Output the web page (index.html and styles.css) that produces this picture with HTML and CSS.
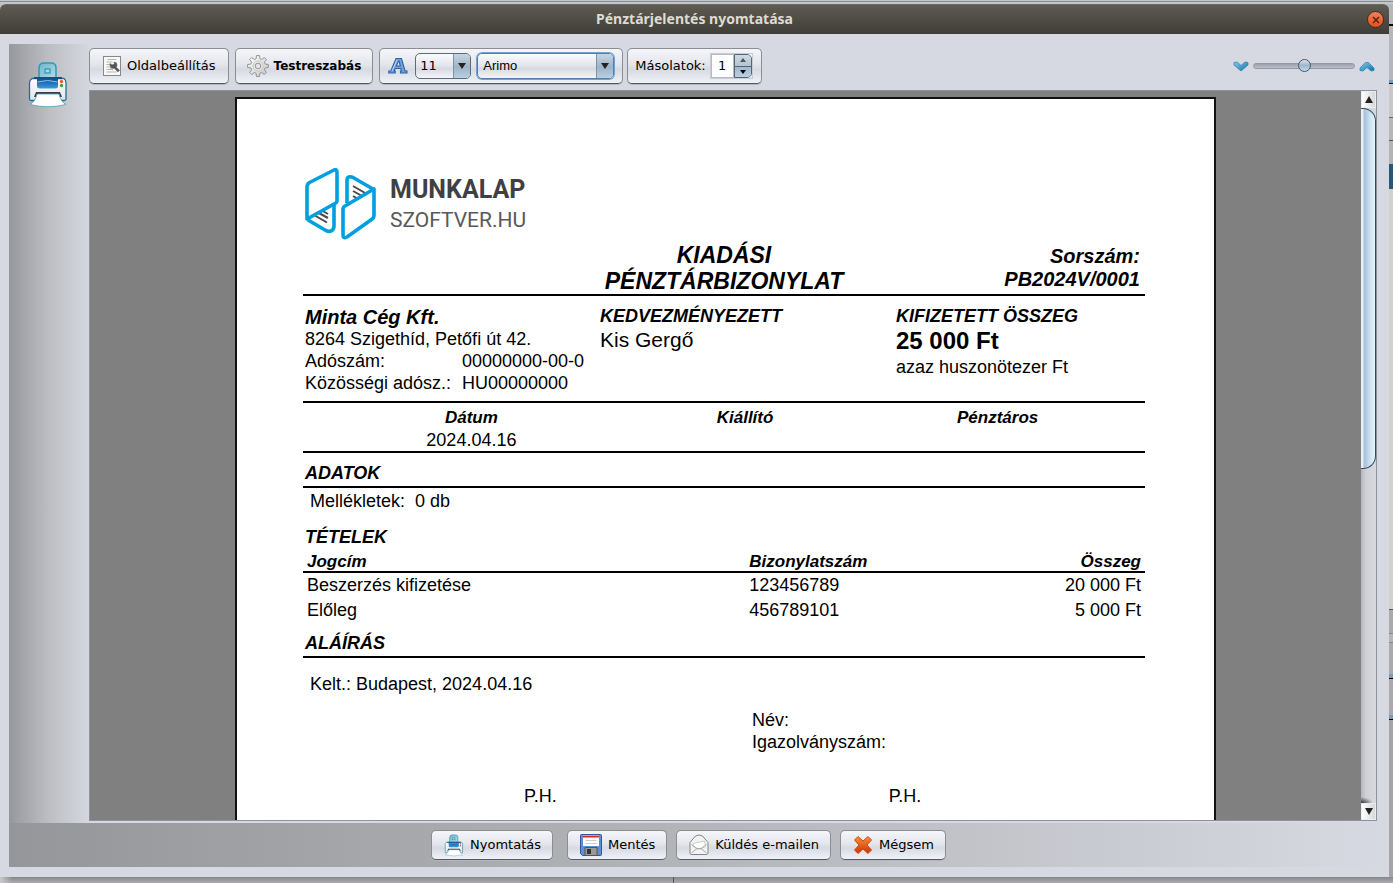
FILE: index.html
```html
<!DOCTYPE html>
<html lang="hu">
<head>
<meta charset="utf-8">
<title>Pénztárjelentés nyomtatása</title>
<link rel="stylesheet" href="styles.css">
</head>
<body>
<svg class="defs" width="0" height="0" aria-hidden="true">
  <defs>
    <linearGradient id="gTray" x1="0" y1="0" x2="1" y2="1"><stop offset="0" stop-color="#6fb6cb"/><stop offset="1" stop-color="#b5dbe6"/></linearGradient>
    <linearGradient id="gSlot" x1="0" y1="0" x2="0" y2="1"><stop offset="0" stop-color="#0a50a0"/><stop offset="1" stop-color="#3f9ad8"/></linearGradient>
    <linearGradient id="gBody" x1="0" y1="0" x2="0" y2="1"><stop offset="0" stop-color="#ffffff"/><stop offset="1" stop-color="#dfe3ea"/></linearGradient>
    <linearGradient id="gRed" x1="0" y1="0" x2="0" y2="1"><stop offset="0" stop-color="#f6913c"/><stop offset="1" stop-color="#cc3300"/></linearGradient>
    <linearGradient id="gBlue" x1="0" y1="0" x2="1" y2="1"><stop offset="0" stop-color="#8ccbe6"/><stop offset="1" stop-color="#0d6ea8"/></linearGradient>
    <linearGradient id="gGear" x1="0" y1="0" x2="1" y2="1"><stop offset="0" stop-color="#ffffff"/><stop offset="1" stop-color="#c4c4c4"/></linearGradient>
    <symbol id="printer" viewBox="0 0 40 48">
      <path d="M11 18V7q0-5 5-5h7q5 0 5 5v11z" fill="url(#gTray)" stroke="#2d9bb8" stroke-width="1.5"/>
      <rect x="17" y="8" width="5" height="4" fill="#a9d7e2" stroke="#2d9bb8" stroke-width="1.3"/>
      <path d="M4 17.500Q1.500 19 1.500 22V38q0 1.500 2 1.500H36q2 0 2-1.500V22q0-3-2-4.500z" fill="url(#gBody)" stroke="#1d7193" stroke-width="1.3"/>
      <path d="M6 16H34v2H6z" fill="#1c4f78"/>
      <path d="M9 17.500H30V25q0 2.500-3 2.500H12q-3 0-3-2.500z" fill="url(#gSlot)"/>
      <path d="M9.500 21q10-3 20 0" fill="none" stroke="#86c3ee" stroke-width="1"/>
      <circle cx="33.500" cy="20.500" r="1.700" fill="#f05a22"/><circle cx="33.500" cy="24.500" r="1.700" fill="#45a22f"/>
      <path d="M8 31H32l2 5H6z" fill="#3a3d42"/>
      <path d="M9 33H31q2 8 7 10.500Q20 48 2 43.500q5-2.500 7-10.500z" fill="#fff" stroke="#4aa0bd" stroke-width=".8"/>
    </symbol>
  </defs>
</svg>

<div class="desktop">
  <main class="window">
    <header class="titlebar">
      <h1>Pénztárjelentés nyomtatása</h1>
      <button class="close" type="button" aria-label="Bezárás"><svg width="8" height="8" viewBox="0 0 8 8"><path d="M1 1l6 6M7 1l-6 6" stroke="#5c2410" stroke-width="1.500"/></svg></button>
    </header>

    <div class="frame">
      <div class="work">
        <aside class="side"><svg width="40" height="48"><use href="#printer"/></svg></aside>
        <section class="main">
          <div class="toolbar">
            <button class="btn tool" type="button">
              <svg width="18" height="20" viewBox="0 0 18 20"><rect x=".5" y=".5" width="17" height="19" fill="#f8f8f8" stroke="#888"/><path d="M4.500 3.500h9M3.500 6h6M3.500 8.500h4M3.500 11h4M3.500 13.500h5M3.500 16h10" stroke="#b5b5b5"/><path d="M7 7.500q2 2 3.500 1t.500-2.500q3 0 3 3 0 1.500-.800 2.200l3.300 3-1.500 1.700-3.500-3.400q-4 .5-4.500-3zM7 12l3 2" fill="#555" stroke="#666" stroke-width=".6"/></svg>
              Oldalbeállítás
            </button>
            <button class="btn tool strong" type="button">
              <svg width="24" height="24" viewBox="0 0 24 24"><g fill="url(#gGear)" stroke="#8b8b8b" stroke-width=".9" stroke-linejoin="round"><path d="M10.500 1.500h3l.4 3.200 1.800.8 2.600-2 2.100 2.100-2 2.600.8 1.900 3.200.4v3l-3.200.4-.8 1.900 2 2.600-2.100 2.100-2.600-2-1.800.8-.4 3.200h-3l-.4-3.200-1.800-.8-2.600 2-2.100-2.100 2-2.600-.8-1.900-3.200-.4v-3l3.200-.4.8-1.900-2-2.600 2.100-2.100 2.600 2 1.800-.8z"/><circle cx="12" cy="12" r="5" fill="#e8e8e8" stroke="#c4c4c4"/><circle cx="12" cy="12" r="2.800" fill="#e2e4ea"/></g></svg>
              Testreszabás
            </button>
            <div class="panel fonts">
              <svg width="20" height="18" viewBox="0 0 20 18"><path d="M.8 16v-2h2L8 1.500h5.500L17 14h2v2h-6.500v-2h1l-.6-2.500H7.200L6 14h1.200v2zM8.300 9h4l-1.200-5h-.6z" fill="#6fa3dc" fill-rule="evenodd" stroke="#2f61a5" stroke-width="1.100"/><path d="M4 14L9 3" fill="none" stroke="#bcd8f3" stroke-width="1"/></svg>
              <span class="combo size"><select aria-label="Betűméret"><option>11</option></select></span>
              <span class="combo family"><select aria-label="Betűtípus"><option>Arimo</option></select></span>
            </div>
            <div class="panel copies">
              <label for="copies">Másolatok:</label>
              <span class="spinner">
                <input id="copies" type="number" value="1" min="1">
                <span class="steps"><button type="button" aria-label="Több"><i class="tri up"></i></button><button type="button" aria-label="Kevesebb"><i class="tri down"></i></button></span>
              </span>
            </div>
            <div class="zoom">
              <svg width="16" height="11" viewBox="0 0 16 11"><path d="M1 1.500l3-.5 4 3.500L12 1l3 .5v2.500L8 10 1 4z" fill="url(#gBlue)" stroke="#2a8abb" stroke-width=".8"/></svg>
              <input type="range" min="0" max="100" value="51" aria-label="Nagyítás">
              <svg width="16" height="11" viewBox="0 0 16 11"><path d="M1 9.500l3 .5 4-3.500 4 3.500 3-.5V7L9.500 1.500h-3L1 7z" fill="url(#gBlue)" stroke="#2a8abb" stroke-width=".8"/></svg>
            </div>
          </div>

          <div class="preview">
            <div class="canvas">
              <article class="page">
                <div class="logo">
                  <svg width="72" height="72" viewBox="0 0 72 72" fill="none" stroke="#009fe0" stroke-width="3.600" stroke-linejoin="round">
                    <path d="M9 47l13 7.500M12 44l11 6M16 42l7 4M48 18l13 7.500M48 23l9 5M48 28l5 3" stroke="#4a4a4c" stroke-width="2"/>
                    <path d="M29 36v22q0 4-3 5t-6-1L3 52"/>
                    <path d="M42 35V13q0-6 6-3.500L68 21"/>
                    <path d="M2 51V19q0-3 2.500-4.500L29 2q3-1.200 3 2v28.500q0 2-2 3z" fill="#fff"/>
                    <path d="M69 21v26q0 3-2.500 4.500L42 69q-4 2-4-2V41q0-2 2-3z" fill="#fff"/>
                  </svg>
                  <div class="logo-text"><strong>MUNKALAP</strong><span>SZOFTVER.HU</span></div>
                </div>
                <header class="doc-head">
                  <h2>KIADÁSI<br>PÉNZTÁRBIZONYLAT</h2>
                  <p>Sorszám:<br>PB2024V/0001</p>
                </header>
                <section class="parties">
                  <div>
                    <h3 class="company">Minta Cég Kft.</h3>
                    <p>8264 Szigethíd, Petőfi út 42.</p>
                    <dl><dt>Adószám:</dt><dd>00000000-00-0</dd><dt>Közösségi adósz.:</dt><dd>HU00000000</dd></dl>
                  </div>
                  <div>
                    <h3>KEDVEZMÉNYEZETT</h3>
                    <p class="payee">Kis Gergő</p>
                  </div>
                  <div>
                    <h3>KIFIZETETT ÖSSZEG</h3>
                    <p class="sum">25 000 Ft</p>
                    <p>azaz huszonötezer Ft</p>
                  </div>
                </section>
                <table class="dates">
                  <thead><tr><th class="c1">Dátum</th><th class="c2">Kiállító</th><th class="c3">Pénztáros</th></tr></thead>
                  <tbody><tr><td>2024.04.16</td><td></td><td></td></tr></tbody>
                </table>
                <h3 class="section ruled">ADATOK</h3>
                <p class="note">Mellékletek:&nbsp; 0 db</p>
                <h3 class="section items-title">TÉTELEK</h3>
                <table class="items">
                  <thead><tr><th class="name">Jogcím</th><th>Bizonylatszám</th><th class="num">Összeg</th></tr></thead>
                  <tbody>
                    <tr><td>Beszerzés kifizetése</td><td>123456789</td><td class="num">20 000 Ft</td></tr>
                    <tr><td>Előleg</td><td>456789101</td><td class="num">5 000 Ft</td></tr>
                  </tbody>
                </table>
                <h3 class="section ruled">ALÁÍRÁS</h3>
                <p class="issued">Kelt.: Budapest, 2024.04.16</p>
                <div class="signer"><p>Név:</p><p>Igazolványszám:</p></div>
                <div class="stamps"><span>P.H.</span><span>P.H.</span></div>
              </article>
            </div>
            <div class="scrollbar">
              <button type="button" aria-label="Fel"><i class="tri up big"></i></button>
              <div class="track"><div class="thumb"></div></div>
              <button type="button" aria-label="Le"><i class="tri down big"></i></button>
            </div>
          </div>
        </section>
      </div>

      <footer class="actions">
        <button class="btn act first" type="button"><svg width="20" height="23" viewBox="0 0 40 48"><use href="#printer"/></svg>Nyomtatás</button>
        <button class="btn act" type="button"><svg width="22" height="22" viewBox="0 0 22 22"><path d="M.5 1.500q0-1 1-1h19q1 0 1 1v19q0 1-1 1h-18l-2-2z" fill="#5f8fd2" stroke="#2d569b"/><path d="M3 1h16v11H3z" fill="#fff"/><path d="M3 1.500h16v2H3z" fill="#d22c20"/><path d="M5.500 6.500h11M5.500 9.500h11" stroke="#ccc"/><path d="M5 13.500h12v8H5z" fill="#9a9a98" stroke="#555"/><rect x="7" y="15" width="4" height="5" fill="#333"/></svg>Mentés</button>
        <button class="btn act" type="button"><svg width="20" height="22" viewBox="0 0 20 22"><path d="M1 8.500L6.500 2q3.500-2 7 0L19 8.500V19q0 1.500-1.500 1.500h-15Q1 20.500 1 19z" fill="#f3f3f3" stroke="#858585"/><path d="M4 9.500L15.500 7l1 5.500-5 2.500H8l-4-3z" fill="#fff" stroke="#ccc"/><path d="M2.500 10.500L8 14.500h4l5.500-4M2.500 19L8 14.500M17.500 19L12 14.500" fill="none" stroke="#aaa"/></svg>Küldés e-mailen</button>
        <button class="btn act" type="button"><svg width="20" height="20" viewBox="0 0 20 20"><path d="M5 1.500L10 6l5-4.500L18.500 5 14 10l4.500 5-3.500 3.500L10 14l-5 4.500L1.500 15 6 10 1.500 5z" fill="url(#gRed)" stroke="#cf4a12" stroke-width="1"/></svg>Mégsem</button>
      </footer>
    </div>
  </main>
  <div class="behind"></div>
</div>
</body>
</html>
```

FILE: styles.css
```css
* { box-sizing: border-box; }
body {
  margin: 0;
  height: 100vh;
  overflow: hidden;
  background: #a6a7aa;
  font: 13px/16px "DejaVu Sans", sans-serif;
  color: #000;
}
h1, h2, h3, p, dl, dd { margin: 0; }
button, input, select { font: inherit; color: inherit; }
button { cursor: pointer; }
.defs { position: absolute; }

.desktop {
  display: flex;
  height: 100vh;
  padding: 4px 0 6px;
  background:
    linear-gradient(#555, #555) 673px 100% / 1px 6px no-repeat,
    linear-gradient(90deg, #c8cacd, transparent 12px) 0 100% / 100% 6px no-repeat,
    linear-gradient(#86878a, #acadb0) 0 100% / 100% 6px no-repeat,
    linear-gradient(#c3c7cb 0 1px, #888c90 1px 2px, #c3c7cb 2px 4px) 0 0 / 100% 4px no-repeat,
    #b9babd;
}
.window {
  flex: 1;
  min-width: 0;
  display: flex;
  flex-direction: column;
  background: #d6d9e1;
  border-radius: 6px 6px 0 0;
}
.behind {
  width: 4px;
  background: linear-gradient(#b6b8bb 0 20px, #000 20px 22px, #b5b6bb 22px 76px, #7b9bb5 76px 79px, #111 79px 80px, #c8c8c8 80px 113px, #666 113px 114px, #b8b6b6 114px 136px, #555 136px 137px, #b5b3b5 137px 160px, #2b5673 160px 185px, #d2d1cc 185px 605px, #555 605px 606px, #aaa9ae 606px 629px, #888 629px 630px, #b5b4b8 630px 638px, #888 638px 639px, #aaa9ae 639px 670px, #7e99ab 670px 674px, #000 674px 675px, #aaa9ae 675px 711px, #7e99ab 711px 715px, #000 715px 716px, #a5a5a9 716px);
}

.titlebar {
  display: grid;
  grid-template-columns: 1fr auto 1fr;
  align-items: center;
  height: 30px;
  padding: 0 5px;
  background: linear-gradient(#5e5b52, #3e3d37);
  border-top: 1px solid #6b685e;
  border-radius: 6px 6px 0 0;
}
.titlebar h1 {
  grid-column: 2;
  padding-bottom: 2px;
  font: bold 14px/18px "Noto Sans", sans-serif;
  color: #dfdbd2;
}
.close {
  justify-self: end;
  display: grid;
  place-items: center;
  width: 17px;
  height: 17px;
  padding: 0;
  border: 1px solid #4a2a1c;
  border-radius: 50%;
  background: linear-gradient(#f2805a, #e4501d);
}

.frame {
  flex: 1;
  min-height: 0;
  display: flex;
  flex-direction: column;
  padding: 10px 12px 10px 9px;
}
.work { flex: 1; min-height: 0; display: flex; }
.side {
  width: 80px;
  padding: 17px 19px;
  background: linear-gradient(90deg, #97989c, #bdbec3 50%, #d4d8de);
}
.main { flex: 1; min-width: 0; display: flex; flex-direction: column; }

.toolbar { display: flex; gap: 6px; padding: 4px 0 6px; }
.btn, .panel {
  display: flex;
  align-items: center;
  border: 1px solid #8a8d92;
  border-bottom-color: #55585d;
  border-radius: 5px;
  background: linear-gradient(#f5f6f9, #e4e6ec 45%, #d8dae3 60%, #f0f2f9);
  box-shadow: 0 1px 0 #b3b6bd;
}
.tool { height: 36px; gap: 6px; padding: 0 12px 0 13px; }
.tool.strong { gap: 4px; padding: 0 11px 0 10px; font-size: 12px; font-weight: bold; }
.panel { height: 36px; }
.fonts { padding: 0 8px; gap: 7px; }
.copies { padding: 0 8px 0 7px; gap: 4px; margin-left: -2px; }

.combo {
  position: relative;
  display: block;
  height: 26px;
  border: 1px solid #5d6b7a;
  border-radius: 5px;
  background: linear-gradient(#fafbfd, #e2e4ea 50%, #d6d9e1 60%, #f3f5fa);
  overflow: hidden;
}
.combo select {
  width: 100%;
  height: 24px;
  padding: 0 4px;
  border: 0;
  outline: 0;
  background: transparent;
  appearance: none;
}
.combo::before {
  content: "";
  position: absolute;
  inset: 0 0 0 auto;
  width: 16px;
  border-left: 1px solid #7b93a8;
  background: linear-gradient(#c7d5e1, #9db3c6 55%, #b9d0e2);
  pointer-events: none;
}
.combo::after {
  content: "";
  position: absolute;
  top: 9px;
  right: 4px;
  border: 4px solid transparent;
  border-top: 6px solid #222;
  border-bottom: 0;
  pointer-events: none;
}
.size { width: 56px; }
.family {
  width: 137px;
  margin-left: -1px;
  box-shadow: 0 0 0 1px #73a4d1;
  border-color: #4f7fae;
  font-family: "Liberation Sans", sans-serif;
}
.family select { padding: 0 5px; }

.spinner { display: flex; height: 26px; border: 1px solid #c9ccd4; }
.spinner input {
  width: 23px;
  padding: 0;
  border: 1px solid #b8bac0;
  background: #fff;
  text-align: center;
  appearance: textfield;
}
.spinner input::-webkit-inner-spin-button { appearance: none; margin: 0; }
.steps {
  display: flex;
  flex-direction: column;
  width: 18px;
  border: 1px solid #50667a;
  border-radius: 0 5px 5px 0;
  overflow: hidden;
}
.steps button {
  flex: 1;
  display: grid;
  place-items: center;
  padding: 0;
  border: 0;
  background: linear-gradient(#cfdae4, #b4c4d2);
}
.steps button + button { border-top: 1px solid #50667a; background: linear-gradient(#a3b8ca, #b9d0e2); }
.tri { border: 3px solid transparent; }
.tri.up { border-top: 0; border-bottom: 4px solid #555; }
.tri.down { border-bottom: 0; border-top: 4px solid #000; }
.tri.big { border-left-width: 4px; border-right-width: 4px; }
.tri.big.up { border-bottom: 7px solid #222; }
.tri.big.down { border-top: 7px solid #222; }

.zoom { display: flex; align-items: center; gap: 4px; margin-left: auto; padding-right: 2px; }
.zoom input { width: 102px; height: 16px; margin: 0; appearance: none; background: transparent; }
.zoom input::-webkit-slider-runnable-track {
  height: 6px;
  border: 1px solid #9599a4;
  border-radius: 3px;
  background: linear-gradient(#9da1ad, #bcc0ca);
}
.zoom input::-webkit-slider-thumb {
  appearance: none;
  width: 13px;
  height: 13px;
  margin-top: -5px;
  border: 1px solid #44576b;
  border-radius: 50%;
  background: linear-gradient(#dbe4ec, #9fb4c8 50%, #c4dcee);
}

.preview {
  flex: 1;
  min-height: 0;
  display: flex;
  margin-bottom: 2px;
  border: 1px solid #8f929d;
}
.canvas {
  flex: 1;
  min-width: 0;
  display: flex;
  justify-content: center;
  align-items: flex-start;
  padding-top: 6px;
  background: #808080;
  overflow: hidden;
}
.scrollbar { display: flex; flex-direction: column; width: 15px; background: #d6d9e1; }
.scrollbar button {
  display: grid;
  place-items: center;
  height: 17px;
  padding: 0;
  border: 1px solid #eceef0;
  background: linear-gradient(90deg, #fff, #d5d7da);
}
.track {
  flex: 1;
  min-height: 0;
  background:
    radial-gradient(ellipse at 0 100%, #333, transparent 70%) 0 100% / 12px 6px no-repeat,
    linear-gradient(90deg, #b3b6bd, #cfcfd6 30%, #d8d9df);
}
.thumb {
  height: 52%;
  border: 1px solid #33485c;
  border-left: 0;
  border-radius: 0 13px 13px 0;
  background: linear-gradient(90deg, #e8eef6 0 2px, #a5bfd8 3px, #c8dff0 60%, #e6f6ff);
}

.page {
  width: 981px;
  min-height: 1380px;
  padding: 69px 69px 0 66px;
  border: 2px solid #111;
  background: #fff;
  font: 18px/22px "Liberation Sans", Arial, sans-serif;
}
.page h3 { font-size: 18px; line-height: 20px; font-style: italic; }
.logo { display: flex; gap: 13px; height: 72px; padding-left: 2px; }
.logo-text { display: flex; flex-direction: column; padding-top: 7px; color: #58585a; font-family: Roboto, sans-serif; }
.logo-text strong { font-size: 25px; line-height: 30px; color: #404042; }
.logo-text span { font-size: 21px; line-height: 30px; }
.doc-head {
  display: grid;
  grid-template-columns: 1fr auto 1fr;
  align-items: end;
  padding: 2px 5px 0 5px;
  border-bottom: 2px solid #000;
  font-weight: bold;
  font-style: italic;
}
.doc-head h2 { grid-column: 2; font-size: 23px; line-height: 26px; text-align: center; }
.doc-head p { font-size: 20px; line-height: 23px; text-align: right; padding-bottom: 3px; }
.parties {
  display: grid;
  grid-template-columns: 295px 296px 1fr;
  padding: 10px 0 7px 2px;
  border-bottom: 2px solid #000;
}
.parties .company { font-size: 20px; line-height: 22px; }
.parties dl { display: grid; grid-template-columns: 157px 1fr; }
.payee { font-size: 21px; line-height: 28px; }
.sum { font-size: 24px; line-height: 30px; font-weight: bold; }

table { width: 100%; border-collapse: collapse; }
th, td { padding: 0; }
th { font-size: 17px; font-style: italic; }
.dates { border-bottom: 2px solid #000; text-align: center; }
.dates th { padding-top: 3px; height: 26px; }
.dates td { height: 22px; }
.c1 { width: 40%; }
.c2 { width: 25%; }
.c3 { width: 35%; }
.page .section { padding: 9px 2px 0; line-height: 22px; }
.page .ruled { padding-bottom: 2px; border-bottom: 2px solid #000; }
.page .items-title { padding-top: 14px; }
.note { padding: 2px 7px 0; }
.items { margin-top: 5px; table-layout: fixed; }
.items thead { border-bottom: 2px solid #000; }
.items th { line-height: 18px; text-align: left; }
.items td { line-height: 25px; }
.items .name { width: 53%; }
.items th:first-child, .items td:first-child { padding-left: 4px; }
.items th.num, .items td.num { text-align: right; padding-right: 4px; }
.issued { padding: 15px 7px 0; }
.signer { margin: 14px 0 32px 449px; }
.stamps { display: flex; gap: 332px; padding-left: 221px; }

.actions {
  display: flex;
  justify-content: center;
  align-items: flex-start;
  padding: 7px 0;
  background: linear-gradient(90deg, #959699, #b4b5b9 50%, #d6d9e1);
}
.act { height: 30px; margin-right: 9px; padding: 0 11px 0 12px; gap: 6px; }
.act.first { margin-right: 14px; }
```
